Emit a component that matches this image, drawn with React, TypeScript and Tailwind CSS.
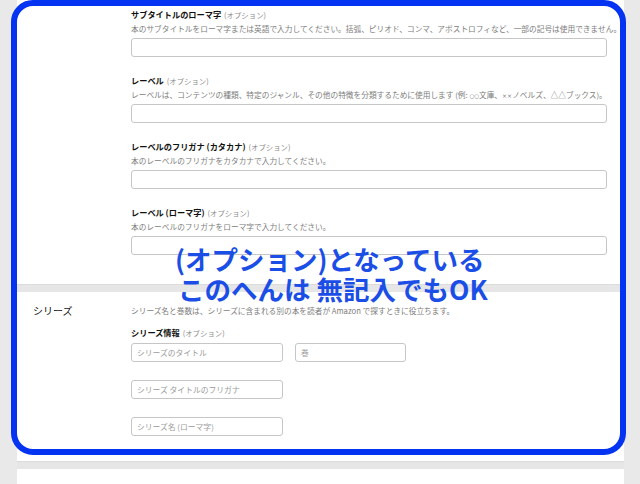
import React from "react";

function Label({ label }: { label: string }) {
  return (
    <div className="flex items-baseline h-[12px] leading-[12px] whitespace-nowrap">
      <span className="text-[8.2px] font-bold text-[#111]">{label}</span>
      <span className="ml-[3px] text-[7.4px] text-[#8a8a8a]">(オプション)</span>
    </div>
  );
}

function Field({ label, desc }: { label: string; desc: React.ReactNode }) {
  return (
    <div className="flex flex-col">
      <Label label={label} />
      <div className="mt-[3px] h-[12px] whitespace-nowrap text-[7.7px] leading-[12px] text-[#7d7d7d]">{desc}</div>
      <div className="mt-[3px] h-[19px] rounded-[3px] border border-[#c6c6c6] bg-white"></div>
    </div>
  );
}

function Box({ text, w }: { text: string; w: string }) {
  return (
    <div className={`${w} h-[19px] rounded-[3px] border border-[#c6c6c6] bg-white pl-[5px] flex items-center text-[7.8px] text-[#9a9a9a] whitespace-nowrap`}>
      {text}
    </div>
  );
}

export default function App() {
  return (
    <div className="relative w-[640px] h-[484px] overflow-hidden bg-[#e9e9e9] font-['Noto_Sans_CJK_JP','Noto_Sans',sans-serif]">
      <div className="flex flex-col pl-[17px] pr-[16px]">
        <div className="bg-white pt-[8px] pb-[29px] pl-[114px] pr-[17px] flex flex-col gap-[17px]">
          <Field
            label="サブタイトルのローマ字"
            desc="本のサブタイトルをローマ字または英語で入力してください。括弧、ピリオド、コンマ、アポストロフィなど、一部の記号は使用できません。"
          />
          <Field
            label="レーベル"
            desc={
              <>
                レーベルは、コンテンツの種類、特定のジャンル、その他の特徴を分類するために使用します (例:{" "}
                <span className="font-['DejaVu_Sans',sans-serif] text-[5.5px]">○○</span>文庫、
                <span className="font-['DejaVu_Sans',sans-serif] text-[6px]">××</span>ノベルズ、△△ブックス)。
              </>
            }
          />
          <Field label="レーベルのフリガナ (カタカナ)" desc="本のレーベルのフリガナをカタカナで入力してください。" />
          <Field label="レーベル (ローマ字)" desc="本のレーベルのフリガナをローマ字で入力してください。" />
        </div>
        <div className="h-[8px] border-t border-[#dcdcdc] bg-[#e6e6e6]"></div>
        <div className="bg-white flex pl-[16px] pt-[13px] pb-[25px]">
          <div className="w-[98px] h-[12px] text-[10px] leading-[12px] text-[#111]">シリーズ</div>
          <div className="flex flex-col">
            <div className="h-[12px] whitespace-nowrap text-[7.7px] leading-[12px] text-[#7d7d7d]">
              シリーズ名と巻数は、シリーズに含まれる別の本を読者が Amazon で探すときに役立ちます。
            </div>
            <div className="mt-[9px]">
              <Label label="シリーズ情報" />
            </div>
            <div className="mt-[5px] flex gap-[12px]">
              <Box text="シリーズのタイトル" w="w-[152px]" />
              <Box text="巻" w="w-[111px]" />
            </div>
            <div className="mt-[18px]">
              <Box text="シリーズ タイトルのフリガナ" w="w-[152px]" />
            </div>
            <div className="mt-[18px]">
              <Box text="シリーズ名 (ローマ字)" w="w-[152px]" />
            </div>
          </div>
        </div>
        <div className="h-[8px] border-t border-[#dcdcdc] bg-[#e6e6e6]"></div>
        <div className="bg-white h-[40px]"></div>
      </div>

      <div className="pointer-events-none absolute left-[11px] top-[0px] w-[615px] h-[455px] rounded-[22px] border-[6px] border-[#0433f2]"></div>

      <div className="pointer-events-none absolute left-[175px] top-[244px] text-[26.5px] leading-[30px] font-bold text-[#1b4ee6] whitespace-nowrap">
        <div className="h-[30px]">(オプション)となっている</div>
        <div className="h-[30px] ml-[3px]">このへんは 無記入でもOK</div>
      </div>
    </div>
  );
}
